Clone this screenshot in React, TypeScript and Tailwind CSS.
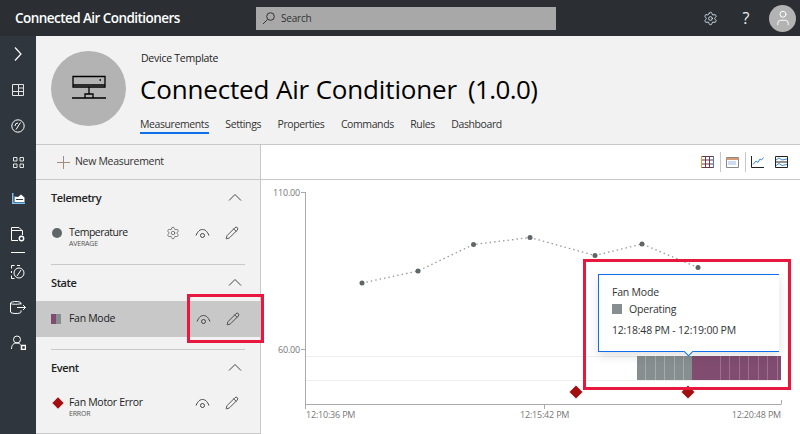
import { Pencil, Settings, User } from "lucide-react";

const font = "font-['Open_Sans',sans-serif]";

function Eye() {
  return (
    <svg width="15" height="11" viewBox="0 0 15 11" fill="none" stroke="#444" strokeWidth="1">
      <path d="M1 7.5C3 3 5 1.5 7.5 1.5S12 3 14 7.5" />
      <circle cx="7.5" cy="7.5" r="2" />
    </svg>
  );
}

function Edit() {
  return <Pencil size={14} strokeWidth={1.4} className="text-[#333]" />;
}

function Chevron() {
  return (
    <svg width="14" height="8" viewBox="0 0 14 8" fill="none" stroke="#444" strokeWidth="1">
      <path d="M1 7.5 7 1.5 13 7.5" />
    </svg>
  );
}

function SectionHead({ label }: { label: string }) {
  return (
    <div className="flex h-9 items-center justify-between pr-[18px] pb-[2px] pl-[15px]">
      <span className="text-[11px] leading-none font-semibold tracking-[-0.4px] text-[#222]">{label}</span>
      <Chevron />
    </div>
  );
}

function Divider() {
  return <div className="ml-[15px] mr-[15px] h-px bg-[#c8c8c8]" />;
}

function NavIcon({ children, h = "h-9" }: { children: React.ReactNode; h?: string }) {
  return <div className={`flex ${h} w-9 items-center justify-center`}>{children}</div>;
}

function Sidebar() {
  const s = { fill: "none", stroke: "#fff", strokeWidth: 1 };
  return (
    <nav className="flex w-9 shrink-0 flex-col bg-[#2f363d]">
      <NavIcon>
        <svg width="8" height="14" {...s} strokeWidth={1.2}>
          <path d="M1 .5 7 7 1 13.5" />
        </svg>
      </NavIcon>
      <NavIcon>
        <svg width="12" height="12" {...s} stroke="#e4e4e4">
          <path d="M.5.5h11v11H.5zM.5 7.5h11M6.5.5v11M6.5 4h5" />
        </svg>
      </NavIcon>
      <NavIcon>
        <svg width="14" height="14" {...s}>
          <circle cx="7" cy="7" r="6.2" />
          <path d="M5 10.5 9.5 3.5M4 7a3 3 0 0 1 3-3" />
        </svg>
      </NavIcon>
      <NavIcon>
        <svg width="11" height="11" {...s} stroke="#e4e4e4">
          <path d="M.5.5H4V4H.5zM7 .5h3.500V4H7zM.5 7H4v3.500H.5zM7 7h3.500v3.500H7z" />
        </svg>
      </NavIcon>
      <NavIcon>
        <svg width="13" height="11" {...s}>
          <path d="M.7 0v10.300H13" stroke="#7cc4f5" strokeWidth="1.5" />
          <path d="M2.500 9h10V4.500L9 1.500 6 4 2.500 3.500z" fill="#fff" stroke="none" />
          <path d="M4 6.500h7" stroke="#2f363d" />
        </svg>
      </NavIcon>
      <NavIcon>
        <svg width="14" height="15" {...s}>
          <path d="M7 13.500H.5V.5H8L11.500 4v4M.5 3.500h11" />
          <circle cx="10.500" cy="11.500" r="2.200" strokeWidth="1.4" />
        </svg>
      </NavIcon>
      <div className="mx-[11px] h-px w-[14px] bg-white" />
      <NavIcon h="h-[38px]">
        <svg width="14" height="14" {...s}>
          <path d="M.5 3.500V.5h3M.5 6v2M.5 10.500v3h3M6 .5h3" />
          <circle cx="8" cy="8" r="5" />
          <path d="M6 11 10 5" />
        </svg>
      </NavIcon>
      <NavIcon h="h-[33px]">
        <svg width="16" height="13" {...s}>
          <path d="M11 3.500V2C11 1 8 .5 6 .5S.5 1 .5 2v9c0 1 3 1.500 5.500 1.500s5-.5 5-1.500V9.500" />
          <path d="M.5 2.500c1 1 9 1 10.500 0M7 6.500h8.500M13 4l2.500 2.500L13 9" />
        </svg>
      </NavIcon>
      <NavIcon>
        <svg width="15" height="15" {...s}>
          <circle cx="6" cy="4.500" r="3.500" />
          <path d="M.5 14c0-4 2-6 5.500-6 1.500 0 2.500.5 3.500 1.500" />
          <path d="M10.500 10.500h4v4h-4z" fill="#2f363d" strokeWidth="1.5" />
        </svg>
      </NavIcon>
    </nav>
  );
}

function PageHead() {
  const tabs = ["Settings", "Properties", "Commands", "Rules", "Dashboard"];
  return (
    <header className="flex h-[109px] shrink-0 border-b border-[#c8c8c8]">
      <div className="ml-[15px] mt-[15px] flex h-[75px] w-[75px] items-center justify-center rounded-full bg-[#b3b3b3]">
        <svg width="36" height="28" viewBox="0 0 36 28" fill="none" stroke="#000" strokeWidth="1.3">
          <path d="M2 1.500h32V10H2zM2 10v2h32v-2" />
          <path d="M18 12v7M14 19h8v4h-8zM1 23h13M22 23h13" />
          <path d="M28.500 5H30" strokeWidth="1.5" />
        </svg>
      </div>
      <div className="ml-[14px] flex flex-col">
        <div className="mt-[15px] pl-px text-[10.5px] leading-[14px] tracking-[-0.25px] text-[#222]">Device Template</div>
        <h1 className="mt-[5px] flex h-[38px] gap-[11px] text-[26px] leading-[38px] tracking-[-0.16px] whitespace-nowrap text-black">
          <span>Connected Air Conditioner</span>
          <span className="tracking-[-0.6px]">(1.0.0)</span>
        </h1>
        <div className="mt-[8px] flex gap-[16.5px] text-[10.5px] font-medium tracking-[-0.4px] text-[#333]">
          <span className="h-[18px] border-b-2 border-[#0f6fe8] leading-[16px]">Measurements</span>
          {tabs.map((t) => (
            <span key={t} className="leading-[16px]">
              {t}
            </span>
          ))}
        </div>
      </div>
    </header>
  );
}

function LeftPanel() {
  return (
    <aside className="w-[225px] shrink-0 border-r border-b border-[#c8c8c8]">
      <div className="flex h-[35px] items-center gap-[5px] border-b border-[#c8c8c8] pl-[21px] text-[10.5px] tracking-[-0.3px] text-[#333]">
        <svg width="13" height="13" fill="none" stroke="#a08c78" strokeWidth="1">
          <path d="M6.500 0v13M0 6.500h13" />
        </svg>
        New Measurement
      </div>

      <SectionHead label="Telemetry" />
      <div className="flex h-[34px] items-center pl-[16px]">
        <div className="h-[10px] w-[10px] rounded-full bg-[#5e6668]" />
        <div className="ml-[7px] mt-[8px] w-[97px]">
          <div className="text-[10.5px] leading-[13px] tracking-[-0.5px] text-[#222]">Temperature</div>
          <div className="text-[7px] leading-[9px] tracking-[-0.2px] text-[#555]">AVERAGE</div>
        </div>
        <Settings size={14} strokeWidth={1.1} className="text-[#444]" />
        <div className="ml-[15px] mr-[15px]">
          <Eye />
        </div>
        <Edit />
      </div>
      <div className="h-[14px]" />
      <Divider />

      <SectionHead label="State" />
      <div className="flex h-9 items-center bg-[#c8c8c8] pl-[15px]">
        <div className="flex h-[10px] w-[10px]">
          <div className="w-1/2 bg-[#804d70]" />
          <div className="w-1/2 bg-[#878e90]" />
        </div>
        <div className="ml-[8px] w-[127px] text-[10.5px] tracking-[-0.3px] text-[#222]">Fan Mode</div>
        <div className="mr-[15px]">
          <Eye />
        </div>
        <Edit />
      </div>
      <div className="h-3" />
      <Divider />

      <SectionHead label="Event" />
      <div className="flex h-[34px] items-center pl-[18px]">
        <div className="h-[8px] w-[8px] rotate-45 bg-[#a30f10]" />
        <div className="ml-[7px] mt-[8px] w-[126px]">
          <div className="text-[10.5px] leading-[13px] tracking-[-0.3px] text-[#222]">Fan Motor Error</div>
          <div className="text-[7px] leading-[9px] tracking-[-0.2px] text-[#555]">ERROR</div>
        </div>
        <div className="mr-[15px]">
          <Eye />
        </div>
        <Edit />
      </div>
    </aside>
  );
}

function Toolbar() {
  return (
    <div className="flex h-[35px] shrink-0 items-center justify-end gap-[5.5px] border-b border-[#c8c8c8] pr-[12px]">
      <svg width="13" height="12" fill="none" stroke="#6a3a4a" strokeWidth="1">
        <path d="M.5.500h12v11H.5zM.5 4h12M.5 8h12M4.500.500v11M8.500.500v11" />
        <path d="M.5 0v12" stroke="#e89a3c" />
        <path d="M12.500 0v12" stroke="#3c7ad8" />
      </svg>
      <div className="h-[20px] w-px bg-[#c8c8c8]" />
      <svg width="13" height="12" fill="none" stroke="#888" strokeWidth="1">
        <path d="M.5 1.500h12v10H.5z" />
        <path d="M.5 3h12" stroke="#d89a70" strokeWidth="2" />
        <path d="M2.500 6h8M2.500 8h8" stroke="#7aa8d8" strokeDasharray="1 1" strokeWidth="1.5" />
      </svg>
      <div className="h-[20px] w-px bg-[#c8c8c8]" />
      <svg width="13" height="12" fill="none" stroke="#222" strokeWidth="1">
        <path d="M.5 0v11.500H13" />
        <path d="M2 8.500 5 5l2 1.500L9 3l1.500 1L12.500 1.500" stroke="#3c8ad8" />
      </svg>
      <svg className="ml-[5.5px]" width="13" height="12" fill="none" stroke="#222" strokeWidth="1">
        <path d="M.5.500h12v11H.5zM.5 6h12" />
        <path d="M1 4 4 2l3 2 5-1M1 9.500l3-2 3 2 5-1" stroke="#3c8ad8" />
      </svg>
    </div>
  );
}

const points = [
  [362, 283],
  [418, 271],
  [473.5, 244.5],
  [530, 237.5],
  [595, 255.5],
  [642, 244],
  [698, 267.5],
];

const axisText = { fontSize: 9, fill: "#777", letterSpacing: -0.2 };

function Chart() {
  return (
    <svg
      className="block h-[254px] w-[539px]"
      viewBox="261 180 539 254"
      style={{ fontFamily: "'Open Sans', sans-serif" }}
    >
      <path d="M306 356.500h476M306 380.500h476" stroke="#eee" />
      <path d="M305.500 192v212.500H781.500M301 192.500h5M301 349.500h5M544.500 404v5M305.500 404v5M781.500 404v-4" fill="none" stroke="#aaa" />
      <text x="300" y="196" textAnchor="end" {...axisText}>110.00</text>
      <text x="300" y="353" textAnchor="end" {...axisText}>60.00</text>
      <text x="306" y="418" {...axisText}>12:10:36 PM</text>
      <text x="520" y="418" {...axisText}>12:15:42 PM</text>
      <text x="781" y="418" textAnchor="end" {...axisText}>12:20:48 PM</text>
      <polyline
        points={points.map((p) => p.join(",")).join(" ")}
        fill="none"
        stroke="#999"
        strokeWidth="1.3"
        strokeDasharray="1.5 3"
      />
      {points.map(([x, y]) => (
        <circle key={x} cx={x} cy={y} r="2.5" fill="#5e6668" />
      ))}
      <rect x="637" y="356" width="55" height="24" fill="#878e90" />
      <rect x="692" y="356" width="89" height="24" fill="#804d70" />
      {[645.5, 655.5, 664.5, 674.5, 683.5].map((x) => (
        <path key={x} d={`M${x} 356v24`} stroke="#a5abad" />
      ))}
      {[720.5, 729.5, 739.5, 748.5, 758.5, 767.5, 777.5].map((x) => (
        <path key={x} d={`M${x} 356v24`} stroke="#9a7290" />
      ))}
      <path d="M576 385.500l6.500 6.500-6.500 6.500-6.500-6.500zM688 385.500l6.500 6.500-6.500 6.500-6.500-6.500z" fill="#a30f10" />
    </svg>
  );
}

export default function App() {
  return (
    <div className={`relative flex h-[434px] w-[800px] flex-col overflow-hidden bg-[#f2f2f2] ${font}`}>
      <div className="flex h-9 shrink-0 items-center bg-[#2b2f33] text-white">
        <div className="ml-[15px] w-[241px] text-[13.5px] font-semibold tracking-[-0.55px] whitespace-nowrap">
          Connected Air Conditioners
        </div>
        <div className="flex h-[23px] w-[300px] items-center gap-[6px] bg-[#a8a8a8] pl-[6px] text-[10px] tracking-[-0.2px] text-[#333]">
          <svg width="13" height="13" fill="none" stroke="#333" strokeWidth="1">
            <circle cx="8.500" cy="4.500" r="3.800" />
            <path d="M5.500 7.500 1 12" />
          </svg>
          Search
        </div>
        <div className="ml-auto flex items-center">
          <Settings size={15} strokeWidth={1.4} className="text-[#dcebf7]" />
          <span className="ml-[21px] w-[14px] text-center text-[16px] leading-none text-[#eee]">?</span>
          <div className="mr-[4px] ml-[16px] flex h-[27px] w-[27px] items-center justify-center rounded-full bg-[#b3b3b3]">
            <User size={18} strokeWidth={1.3} className="text-white" />
          </div>
        </div>
      </div>

      <div className="flex min-h-0 flex-1">
        <Sidebar />
        <main className="flex min-w-0 flex-1 flex-col">
          <PageHead />
          <div className="flex min-h-0 flex-1">
            <LeftPanel />
            <section className="flex flex-1 flex-col bg-white">
              <Toolbar />
              <Chart />
            </section>
          </div>
        </main>
      </div>

      {/* tooltip over the state bar */}
      <div className="absolute top-[274px] left-[598px] h-[78px] w-[181px] border border-r-0 border-[#0f6fe8] bg-white pt-[9px] pl-[13px] text-[10.5px] tracking-[-0.2px] text-[#333] shadow-[0_4px_10px_rgba(0,0,0,0.12)]">
        <div className="leading-[16px]">Fan Mode</div>
        <div className="flex items-center gap-[7px] leading-[18px]">
          <div className="h-[10px] w-[10px] bg-[#878e90]" />
          Operating
        </div>
        <div className="mt-[4px] leading-[16px]">12:18:48 PM - 12:19:00 PM</div>
      </div>
      <div className="absolute top-[348px] left-[685px] h-[7px] w-[7px] rotate-45 border-r border-b border-[#0f6fe8] bg-white" />

      {/* annotation boxes */}
      <div className="absolute top-[259px] left-[583px] h-[131px] w-[208px] border-[3px] border-[#e8173d]" />
      <div className="absolute top-[294px] left-[187px] h-[49px] w-[77px] border-[3px] border-[#e8173d]" />
    </div>
  );
}
